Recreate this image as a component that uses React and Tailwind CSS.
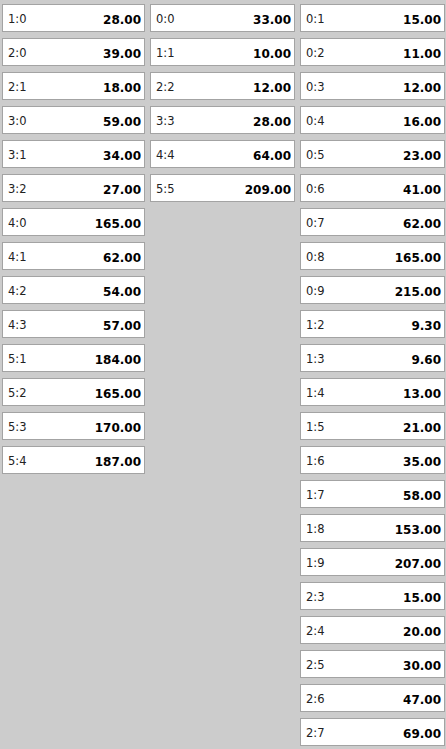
const homeWins = [
  ["1:0", "28.00"],
  ["2:0", "39.00"],
  ["2:1", "18.00"],
  ["3:0", "59.00"],
  ["3:1", "34.00"],
  ["3:2", "27.00"],
  ["4:0", "165.00"],
  ["4:1", "62.00"],
  ["4:2", "54.00"],
  ["4:3", "57.00"],
  ["5:1", "184.00"],
  ["5:2", "165.00"],
  ["5:3", "170.00"],
  ["5:4", "187.00"],
];

const draws = [
  ["0:0", "33.00"],
  ["1:1", "10.00"],
  ["2:2", "12.00"],
  ["3:3", "28.00"],
  ["4:4", "64.00"],
  ["5:5", "209.00"],
];

const awayWins = [
  ["0:1", "15.00"],
  ["0:2", "11.00"],
  ["0:3", "12.00"],
  ["0:4", "16.00"],
  ["0:5", "23.00"],
  ["0:6", "41.00"],
  ["0:7", "62.00"],
  ["0:8", "165.00"],
  ["0:9", "215.00"],
  ["1:2", "9.30"],
  ["1:3", "9.60"],
  ["1:4", "13.00"],
  ["1:5", "21.00"],
  ["1:6", "35.00"],
  ["1:7", "58.00"],
  ["1:8", "153.00"],
  ["1:9", "207.00"],
  ["2:3", "15.00"],
  ["2:4", "20.00"],
  ["2:5", "30.00"],
  ["2:6", "47.00"],
  ["2:7", "69.00"],
];

function OddBox({ score, odd }) {
  return (
    <div className="h-[28px] flex items-center justify-between bg-white border border-[#a3a3a3] pl-[5px] pr-[3px] pt-[4px]">
      <span className="text-[11.5px] text-[#222]">{score}</span>
      <span className="text-[12px] font-bold text-black">{odd}</span>
    </div>
  );
}

function Column({ items }) {
  return (
    <div className="flex flex-col gap-[6px]">
      {items.map(([s, o]) => (
        <OddBox key={s} score={s} odd={o} />
      ))}
    </div>
  );
}

export default function App() {
  return (
    <div
      className="w-[446px] h-[749px] overflow-hidden bg-[#cccccc] pt-[4px] pl-[2px]"
      style={{ fontFamily: '"DejaVu Sans", Verdana, sans-serif' }}
    >
      <div className="grid grid-cols-[143px_145px_145px] gap-x-[5px] items-start">
        <Column items={homeWins} />
        <Column items={draws} />
        <Column items={awayWins} />
      </div>
    </div>
  );
}
